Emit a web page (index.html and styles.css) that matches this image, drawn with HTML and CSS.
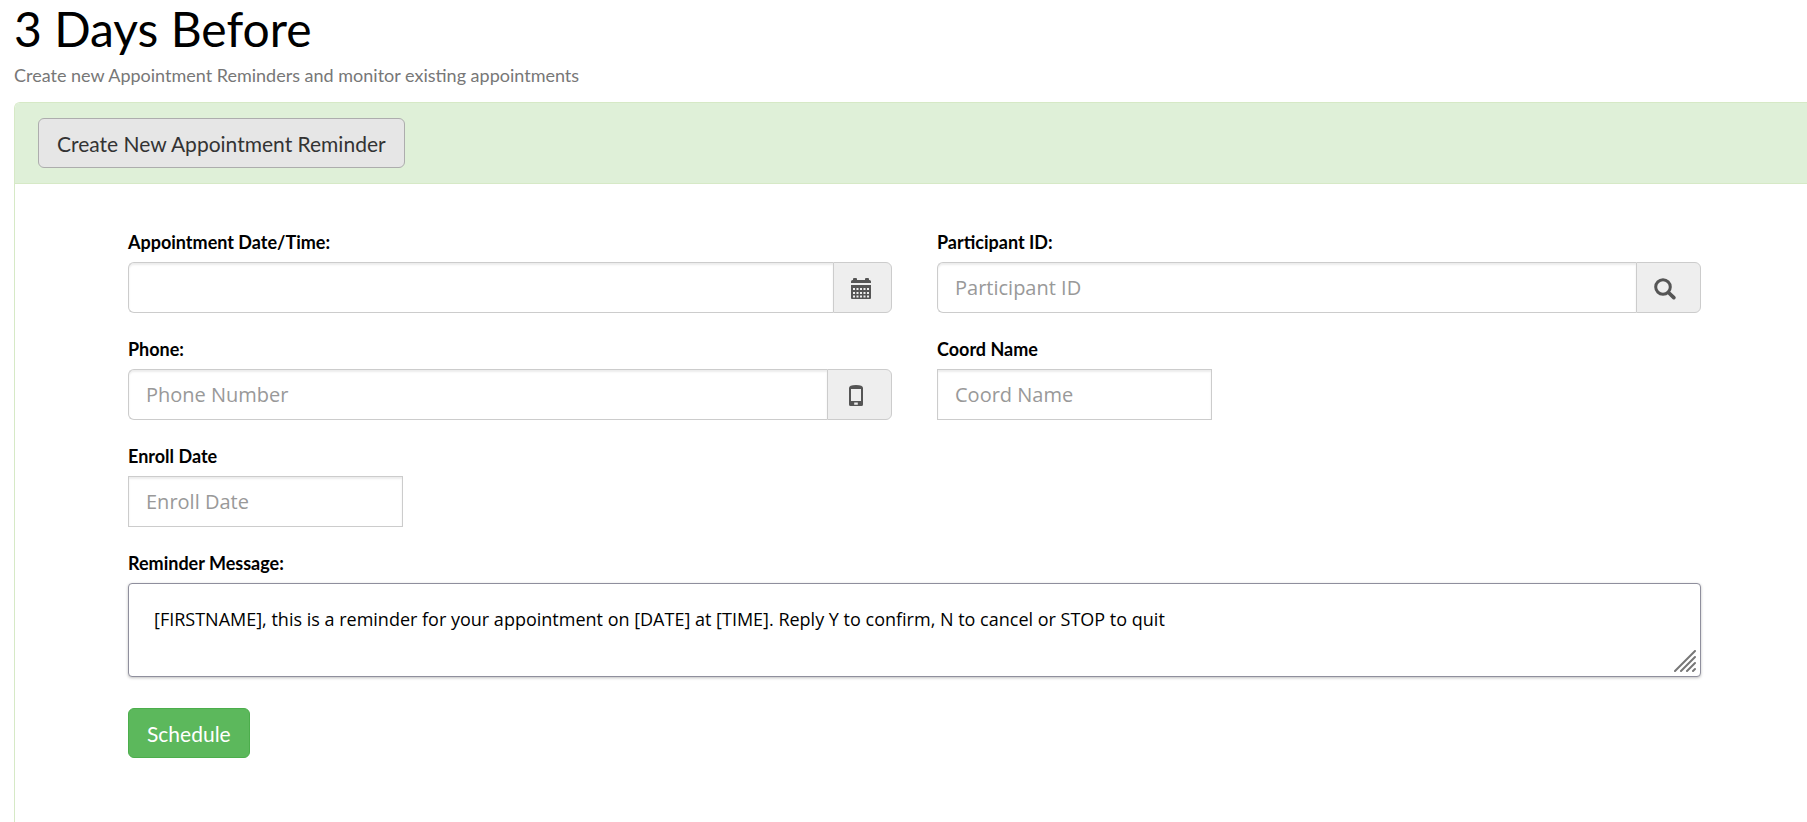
FILE: index.html
```html
<!DOCTYPE html>
<html lang="en">
<head>
<meta charset="utf-8">
<title>3 Days Before</title>
<link rel="stylesheet" href="styles.css">
</head>
<body>
<main class="page">
  <h1 class="title">3 Days Before</h1>
  <p class="subtitle">Create new Appointment Reminders and monitor existing appointments</p>
  <section class="panel">
    <header class="panel-heading">
      <button type="button" class="btn btn-default">Create New Appointment Reminder</button>
    </header>
    <form class="form">
      <div class="field">
        <label for="when">Appointment Date/Time:</label>
        <div class="group">
          <input class="control" id="when" type="text">
          <button type="button" class="addon addon-date" aria-label="Pick a date">
            <svg width="20" height="21" viewBox="0 0 20 21" fill="#555" aria-hidden="true">
              <path d="M0 5V3.500Q0 2 1.500 2H2V1Q2 0 3 0H5Q6 0 6 1V2H14V1Q14 0 15 0H17Q18 0 18 1V2H18.500Q20 2 20 3.500V5Z"/>
              <path fill-rule="evenodd" d="M0 7H20V20Q20 21 19 21H1Q0 21 0 20ZM2 10V12H4V10ZM5.500 10V12H7.500V10ZM9 10V12H11V10ZM12.500 10V12H14.500V10ZM16 10V12H18V10ZM2 14V16H4V14ZM5.500 14V16H7.500V14ZM9 14V16H11V14ZM12.500 14V16H14.500V14ZM16 14V16H18V14ZM2 17.500V19.500H4V17.500ZM5.500 17.500V19.500H7.500V17.500ZM9 17.500V19.500H11V17.500ZM12.500 17.500V19.500H14.500V17.500ZM16 17.500V19.500H18V17.500Z"/>
            </svg>
          </button>
        </div>
      </div>
      <div class="field">
        <label for="participant">Participant ID:</label>
        <div class="group">
          <input class="control" id="participant" type="text" placeholder="Participant ID">
          <button type="button" class="addon" aria-label="Search participant">
            <svg width="22" height="22" viewBox="0 0 22 22" fill="none" stroke="#555" aria-hidden="true">
              <circle cx="9" cy="9" r="7.300" stroke-width="3"/>
              <path d="M14.500 14.500L19.800 19.600" stroke-width="3.700" stroke-linecap="round"/>
            </svg>
          </button>
        </div>
      </div>
      <div class="field">
        <label for="phone">Phone:</label>
        <div class="group">
          <input class="control" id="phone" type="text" placeholder="Phone Number">
          <span class="addon addon-phone">
            <svg width="14" height="21" viewBox="0 0 14 21" fill="#555" aria-hidden="true">
              <path fill-rule="evenodd" d="M0 3Q0 0 7 0Q14 0 14 3V19.500Q14 21 12.500 21H1.500Q0 21 0 19.500ZM2 4V16H12V4ZM5.200 17.500V19.700H8.800V17.500Z"/>
            </svg>
          </span>
        </div>
      </div>
      <div class="field">
        <label for="coord">Coord Name</label>
        <input class="control control-short" id="coord" type="text" placeholder="Coord Name">
      </div>
      <div class="field field-wide">
        <label for="enroll">Enroll Date</label>
        <input class="control control-short" id="enroll" type="text" placeholder="Enroll Date">
      </div>
      <div class="field field-wide">
        <label for="message">Reminder Message:</label>
        <div class="message-box">
          <textarea class="message" id="message">[FIRSTNAME], this is a reminder for your appointment on [DATE] at [TIME]. Reply Y to confirm, N to cancel or STOP to quit</textarea>
          <svg class="grip" width="22" height="22" viewBox="0 0 22 22" stroke="#777" stroke-width="2" stroke-linecap="round" aria-hidden="true">
            <path d="M1 21L21 1M7 21L21 7M13 21L21 13M19 21L21 19"/>
          </svg>
        </div>
      </div>
      <div class="field-wide">
        <button type="submit" class="btn btn-success">Schedule</button>
      </div>
    </form>
  </section>
</main>
</body>
</html>
```
FILE: styles.css
```css
* {
  box-sizing: border-box;
}

body {
  margin: 0;
  background: #fff;
  color: #000;
  font-family: Lato, sans-serif;
  font-size: 18px;
}

.page {
  display: flex;
  flex-direction: column;
  min-height: 100vh;
  padding-left: 14px;
}

.title {
  margin: 0;
  font-size: 48px;
  font-weight: 400;
  line-height: 58px;
}

.subtitle {
  margin: 0;
  padding: 4px 0 14px;
  color: #777;
  font-size: 18px;
  line-height: 26px;
}

.panel {
  flex: 1;
  border: 1px solid #d6e9c6;
  border-width: 1px 0 0 1px;
  border-top-left-radius: 6px;
}

.panel-heading {
  padding: 15px 23px;
  background: #dff0d8;
  border-bottom: 1px solid #d6e9c6;
  border-top-left-radius: 5px;
}

.btn {
  display: block;
  height: 50px;
  padding: 0 18px;
  border: 1px solid;
  border-radius: 6px;
  font-family: inherit;
  font-size: 21px;
}

.btn-default {
  background: #e6e6e6;
  border-color: #adadad;
  color: #333;
}

.btn-success {
  background: #5cb85c;
  border-color: #4cae4c;
  color: #fff;
}

.form {
  display: grid;
  grid-template-columns: 1fr 1fr;
  gap: 23px 45px;
  padding: 45px 106px 62px 113px;
}

.field {
  display: flex;
  flex-direction: column;
  align-items: flex-start;
}

.field-wide {
  grid-column: 1 / -1;
}

label {
  padding-bottom: 7px;
  font-size: 18px;
  font-weight: 700;
  line-height: 26px;
}

.group {
  display: flex;
  width: 100%;
}

.control {
  flex: 1;
  min-width: 0;
  height: 51px;
  padding: 0 17px;
  border: 1px solid #ccc;
  border-radius: 0;
  background: #fff;
  box-shadow: inset 0 2px 2px rgba(0, 0, 0, 0.075);
  color: #555;
  font-family: "Open Sans", sans-serif;
  font-size: 20px;
}

.group .control {
  border-right: 0;
  border-radius: 6px 0 0 6px;
}

.control-short {
  flex: none;
  width: 275px;
}

.control::placeholder {
  color: #999;
  opacity: 1;
}

.addon {
  display: flex;
  align-items: center;
  width: 65px;
  padding: 2px 0 0 17px;
  border: 1px solid #ccc;
  border-radius: 0 6px 6px 0;
  background: #eee;
}

.addon-date {
  width: 59px;
}

.addon-phone {
  padding-left: 21px;
}

.message-box {
  position: relative;
  display: flex;
  width: 100%;
}

.message {
  width: 100%;
  height: 94px;
  padding: 22px 25px;
  border: 1px solid #8f8f9d;
  border-radius: 4px;
  box-shadow: 0 1px 3px rgba(0, 0, 0, 0.25);
  color: #000;
  font-family: "Open Sans", sans-serif;
  font-size: 18px;
  line-height: 26px;
  resize: none;
}

.grip {
  position: absolute;
  right: 5px;
  bottom: 5px;
}

.form > .field-wide:last-child {
  padding-top: 8px;
}
```
